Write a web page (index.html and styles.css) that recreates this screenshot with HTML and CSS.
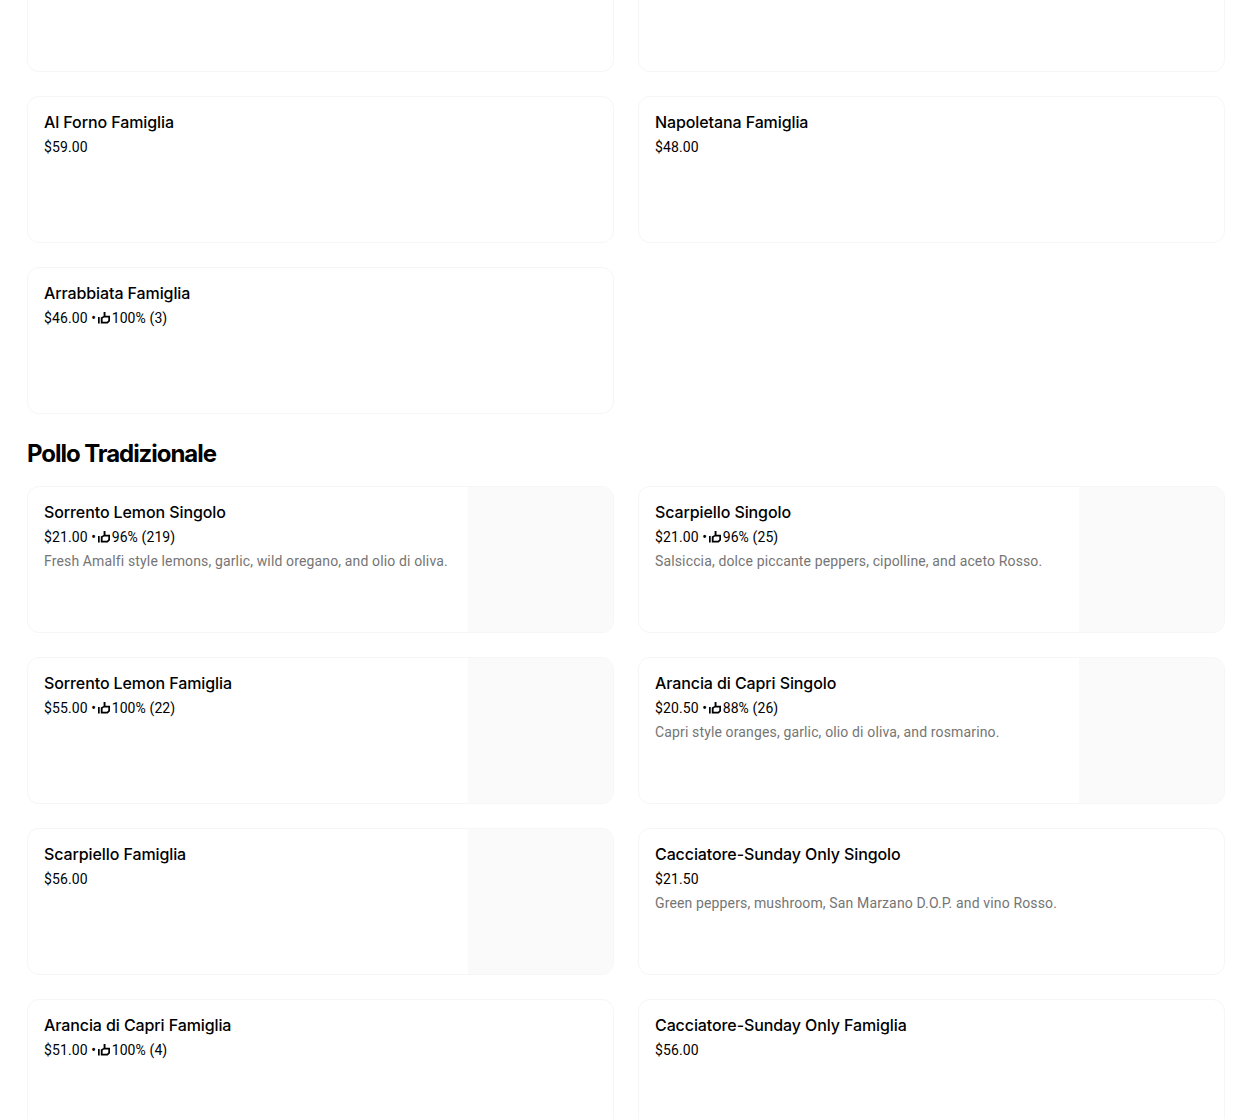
FILE: index.html
```html
<!DOCTYPE html>
<html>
<head>
    <meta charset="utf-8">
    <meta name="viewport" content="width=device-width, initial-scale=1">
    <title>Menu</title>
    <link rel="stylesheet" href="styles.css">
</head>
<body>
    <svg class="icon-defs" width="0" height="0">
        <symbol id="thumb" viewBox="0 0 12 12">
            <path d="M0 5h1.7v6.500H0z"/>
            <path fill-rule="evenodd" d="M5.600 0h1.900v3.800H12v5.400l-2.300 2.300H2.800V5.500l2.800-1.600V0zm-1 6.400v3.400h4.400l1.300-1.300V5.500H5.900z"/>
        </symbol>
    </svg>

    <main class="menu">
        <div class="item-grid">
            <div class="item"></div>
            <div class="item"></div>
            <div class="item">
                <div class="item-text">
                    <div class="item-name">Al Forno Famiglia</div>
                    <div class="item-meta">$59.00</div>
                </div>
            </div>
            <div class="item">
                <div class="item-text">
                    <div class="item-name">Napoletana Famiglia</div>
                    <div class="item-meta">$48.00</div>
                </div>
            </div>
            <div class="item">
                <div class="item-text">
                    <div class="item-name">Arrabbiata Famiglia</div>
                    <div class="item-meta">$46.00 • <svg class="thumb"><use href="#thumb"/></svg> 100% (3)</div>
                </div>
            </div>
        </div>

        <h2 class="section-title">Pollo Tradizionale</h2>

        <div class="item-grid">
            <div class="item">
                <div class="item-text">
                    <div class="item-name">Sorrento Lemon Singolo</div>
                    <div class="item-meta">$21.00 • <svg class="thumb"><use href="#thumb"/></svg> 96% (219)</div>
                    <div class="item-desc">Fresh Amalfi style lemons, garlic, wild oregano, and olio di oliva.</div>
                </div>
                <div class="item-photo"></div>
            </div>
            <div class="item">
                <div class="item-text">
                    <div class="item-name">Scarpiello Singolo</div>
                    <div class="item-meta">$21.00 • <svg class="thumb"><use href="#thumb"/></svg> 96% (25)</div>
                    <div class="item-desc">Salsiccia, dolce piccante peppers, cipolline, and aceto Rosso.</div>
                </div>
                <div class="item-photo"></div>
            </div>
            <div class="item">
                <div class="item-text">
                    <div class="item-name">Sorrento Lemon Famiglia</div>
                    <div class="item-meta">$55.00 • <svg class="thumb"><use href="#thumb"/></svg> 100% (22)</div>
                </div>
                <div class="item-photo"></div>
            </div>
            <div class="item">
                <div class="item-text">
                    <div class="item-name">Arancia di Capri Singolo</div>
                    <div class="item-meta">$20.50 • <svg class="thumb"><use href="#thumb"/></svg> 88% (26)</div>
                    <div class="item-desc">Capri style oranges, garlic, olio di oliva, and rosmarino.</div>
                </div>
                <div class="item-photo"></div>
            </div>
            <div class="item">
                <div class="item-text">
                    <div class="item-name">Scarpiello Famiglia</div>
                    <div class="item-meta">$56.00</div>
                </div>
                <div class="item-photo"></div>
            </div>
            <div class="item">
                <div class="item-text">
                    <div class="item-name">Cacciatore-Sunday Only Singolo</div>
                    <div class="item-meta">$21.50</div>
                    <div class="item-desc">Green peppers, mushroom, San Marzano D.O.P. and vino Rosso.</div>
                </div>
            </div>
            <div class="item">
                <div class="item-text">
                    <div class="item-name">Arancia di Capri Famiglia</div>
                    <div class="item-meta">$51.00 • <svg class="thumb"><use href="#thumb"/></svg> 100% (4)</div>
                </div>
            </div>
            <div class="item">
                <div class="item-text">
                    <div class="item-name">Cacciatore-Sunday Only Famiglia</div>
                    <div class="item-meta">$56.00</div>
                </div>
            </div>
        </div>
    </main>
</body>
</html>
```

FILE: styles.css
```css
html, body {
    margin: 0;
    padding: 0;
    height: 100%;
    overflow: hidden;
    background: #fff;
}

body {
    font-family: "Inter", "Liberation Sans", sans-serif;
    color: #000;
}

.icon-defs {
    display: block;
}

/* page is scrolled, first row is cut off at the top */
.menu {
    margin-top: -75px;
    padding: 0 25px 0 27px;
}

.item-grid {
    display: grid;
    grid-template-columns: 1fr 1fr;
    gap: 24px;
}

.item {
    display: flex;
    height: 147px;
    box-sizing: border-box;
    border: 1px solid #f6f6f6;
    border-radius: 12px;
    overflow: hidden;
}

.item-text {
    flex: 1;
    min-width: 0;
    padding: 15px 16px;
}

.item-photo {
    width: 145px;
    background: #fafafa;
}

.item-name {
    font-size: 16px;
    font-weight: 500;
    line-height: 20px;
    letter-spacing: -0.1px;
}

.item-meta {
    margin-top: 5px;
    font-family: "Roboto", "Liberation Sans", sans-serif;
    font-size: 14px;
    line-height: 20px;
    letter-spacing: 0.1px;
}

.item-desc {
    margin-top: 4px;
    font-family: "Roboto", "Liberation Sans", sans-serif;
    font-size: 14px;
    line-height: 20px;
    letter-spacing: 0.14px;
    color: #757575;
}

.thumb {
    width: 12px;
    height: 12px;
    margin: 0 -2px 0 -1.5px;
    vertical-align: -1px;
}

.section-title {
    margin: 24px 0 16px;
    font-size: 24px;
    font-weight: 700;
    line-height: 32px;
    letter-spacing: -1.05px;
}
```
